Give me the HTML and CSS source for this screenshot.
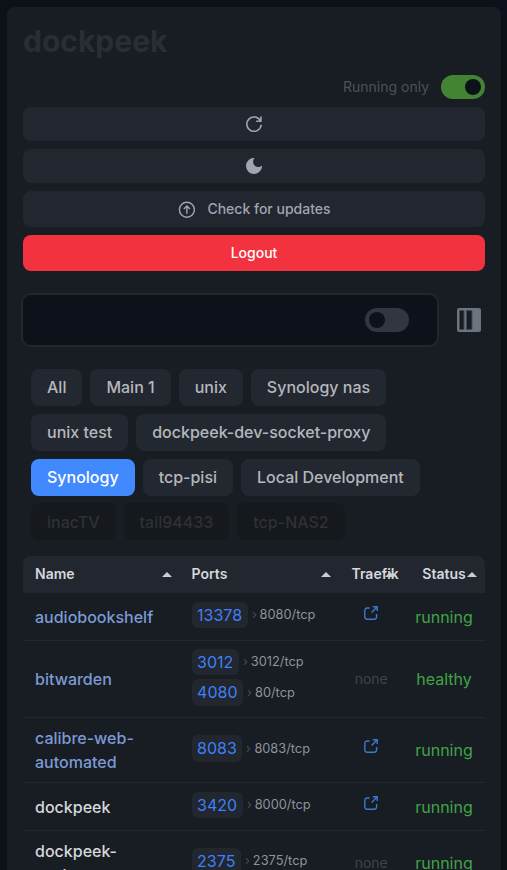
FILE: index.html
```html
<!DOCTYPE html>
<html lang="en">
<head>
<meta charset="utf-8">
<title>dockpeek</title>
<link rel="stylesheet" href="styles.css">
</head>
<body>
<svg width="0" height="0" class="defs">
  <symbol id="ext" viewBox="0 0 14 14"><path d="M5.6 2H3A2.2 2.2 0 0 0 .8 4.200V11A2.200 2.200 0 0 0 3 13.200H10.400A2.200 2.200 0 0 0 12.600 11V8M8.800 .8H13.200V5M13 1L7.600 6.400" fill="none" stroke="currentColor" stroke-width="1.400"/></symbol>
  <symbol id="chev" viewBox="0 0 5 8"><path d="M1 1.200L3.800 4L1 6.800" fill="none" stroke="currentColor" stroke-width="1.100"/></symbol>
</svg>
<main class="card">
  <h1>dockpeek</h1>
  <div class="controls">
    <div class="running"><span>Running only</span><span class="switch on"></span></div>
    <button class="btn"><svg width="16" height="16" viewBox="0 0 16 16" fill="none" stroke="currentColor" stroke-width="1.6"><path d="M14.900 .6V5.300H10.200M14.500 5A7.200 7.200 0 1 0 15.200 8.800"/></svg></button>
    <button class="btn"><svg width="16" height="16" viewBox="0 0 16 16"><path d="M8.600 0A8 8 0 1 0 16 7.400A5.200 5.200 0 1 1 8.600 0Z" fill="currentColor"/></svg></button>
    <button class="btn tall"><svg width="18" height="18" viewBox="-.9 -.7 18 18" fill="none" stroke="currentColor" stroke-width="1.400"><circle cx="9" cy="9" r="7.500"/><path d="M9 13V5.500M5.900 8.400L9 5.300L12.100 8.400"/></svg>Check for updates</button>
    <button class="btn tall logout">Logout</button>
  </div>
  <div class="searchbar">
    <div class="search"><span class="switch"></span></div>
    <svg class="columns" width="24" height="24" viewBox="0 0 24 24"><rect width="24" height="24" rx="2" fill="#6e747d"/><path d="M2.500 2.500H7V21.500H2.500ZM9.500 2.500H15V21.500H9.500Z" fill="#181c23" stroke="#444a52"/></svg>
  </div>
  <div class="chips">
    <span class="chip">All</span><span class="chip">Main 1</span><span class="chip">unix</span><span class="chip">Synology nas</span>
    <span class="chip">unix test</span><span class="chip">dockpeek-dev-socket-proxy</span>
    <span class="chip active">Synology</span><span class="chip">tcp-pisi</span><span class="chip">Local Development</span>
    <span class="chip off">inacTV</span><span class="chip off">tail94433</span><span class="chip off">tcp-NAS2</span>
  </div>
  <table>
    <colgroup><col class="c-name"><col class="c-ports"><col class="c-traefik"><col class="c-status"></colgroup>
    <thead><tr><th>Name</th><th>Ports</th><th>Traefik</th><th class="mid">Status</th></tr></thead>
    <tbody>
      <tr><td class="link">audiobookshelf</td><td><div class="port"><b>13378</b><svg><use href="#chev"/></svg><span>8080/tcp</span></div></td><td class="mid"><svg class="ext"><use href="#ext"/></svg></td><td class="state">running</td></tr>
      <tr><td class="link">bitwarden</td><td><div class="port"><b>3012</b><svg><use href="#chev"/></svg><span>3012/tcp</span></div><div class="port"><b>4080</b><svg><use href="#chev"/></svg><span>80/tcp</span></div></td><td class="none">none</td><td class="state">healthy</td></tr>
      <tr><td class="link">calibre-web-automated</td><td><div class="port"><b>8083</b><svg><use href="#chev"/></svg><span>8083/tcp</span></div></td><td class="mid"><svg class="ext"><use href="#ext"/></svg></td><td class="state">running</td></tr>
      <tr><td class="name">dockpeek</td><td><div class="port"><b>3420</b><svg><use href="#chev"/></svg><span>8000/tcp</span></div></td><td class="mid"><svg class="ext"><use href="#ext"/></svg></td><td class="state">running</td></tr>
      <tr><td class="name">dockpeek-socket-proxy</td><td><div class="port"><b>2375</b><svg><use href="#chev"/></svg><span>2375/tcp</span></div></td><td class="none">none</td><td class="state">running</td></tr>
    </tbody>
  </table>
</main>
</body>
</html>
```
FILE: styles.css
```css
* { box-sizing: border-box; }
html { height: 100%; overflow: hidden; background: #0d1117; }
body { margin: 0; padding: 7px 6px 0 7px; height: 870px; overflow: hidden; background: linear-gradient(#0d1019, #0d1014 80px); font: 16px/24px Inter, sans-serif; color: #d5d8dc; }
.defs { position: absolute; }
.card { height: 900px; padding: 16px; border-radius: 8px; background: #181c23; }
h1 { margin: 0; font-size: 30px; line-height: 36px; font-weight: 700; color: #292e36; }
.controls { display: flex; flex-direction: column; gap: 8px; margin-top: 16px; }
.running { display: flex; justify-content: flex-end; align-items: center; gap: 12px; height: 24px; font-size: 14px; color: #4d5259; }
.switch { width: 44px; height: 24px; padding: 4px; border-radius: 12px; background: #32363e; }
.switch::before { content: ""; display: block; width: 16px; height: 16px; border-radius: 50%; background: #0d1119; }
.switch.on { background: #438433; }
.switch.on::before { margin-left: 20px; }
.btn { display: flex; align-items: center; justify-content: center; gap: 12px; height: 34px; padding: 0; border: 0; border-radius: 8px; background: #22262e; color: #a0a5b1; font: 500 14px/20px Inter, sans-serif; }
.btn.tall { height: 36px; }
.btn.logout { background: #f3323f; color: #fff; }
.searchbar { display: flex; align-items: center; justify-content: space-between; margin: 22px 4px 0 -2px; }
.search { display: flex; align-items: center; justify-content: flex-end; width: 418px; height: 54px; padding-right: 28px; border: 2px solid #22262e; border-radius: 10px; background: #0d1119; }
.chips { display: flex; flex-wrap: wrap; gap: 7.800px 8px; width: 410px; margin: 22px 0 15.600px; padding-left: 8px; }
.chip { height: 37px; padding: 6.400px 16px 0; border-radius: 8px; background: #23272f; color: #b4b8be; font-weight: 500; white-space: nowrap; }
.chip.active { background: #4189ff; color: #fff; }
.chip.off { background: #15181c; color: #2d3137; }
table { width: 462px; table-layout: fixed; border-collapse: separate; border-spacing: 0; }
.c-name { width: 156.600px; }
.c-ports { width: 159.900px; }
.c-traefik { width: 63.500px; }
.c-status { width: 82px; }
th { position: relative; height: 37.400px; padding: 0 12px 1.400px; background: #22262e; text-align: left; font-size: 14px; line-height: 20px; font-weight: 600; white-space: nowrap; }
th:first-child { border-top-left-radius: 8px; }
th:last-child { border-top-right-radius: 8px; }
th::after { content: ""; position: absolute; right: 8px; top: 16px; border: solid transparent; border-width: 0 5px 5px; border-bottom-color: #c9ccd1; }
td { padding: 8px 12px; border-bottom: 1px solid #23272f; font-weight: 500; vertical-align: middle; }
.link { color: #7b9bd3; }
.mid, .none, .state { text-align: center; }
.none { padding-left: 0; padding-right: 0; color: #3f434a; font-size: 14px; font-weight: 400; }
.state { color: #3fa545; font-weight: 400; }
.port { display: flex; align-items: center; height: 26.400px; margin: .2px 0 3.900px; }
.port + .port { margin: 0 0 3.700px; }
.port b { height: 26.400px; padding: 0 5.500px; border-radius: 6px; background: #22262e; color: #3e80f8; font-weight: 400; line-height: 27px; }
.port svg { width: 5px; height: 8px; margin: 0 3px 0 4px; color: #454a51; }
.port span { font-size: 12.800px; font-weight: 400; color: #8d939b; }
.ext { display: block; width: 14px; height: 14px; margin: -8px auto 0; color: #3979cf; }
```
